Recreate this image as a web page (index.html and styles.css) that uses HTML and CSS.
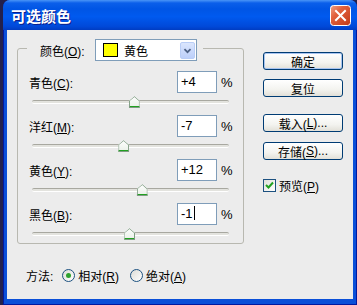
FILE: index.html
```html
<!DOCTYPE html>
<html>
<head>
    <meta charset="utf-8">
    <title>可选颜色</title>
    <link rel="stylesheet" href="styles.css">
</head>
<body>
    <div class="window">
        <div class="titlebar">
            <span class="title">可选颜色</span>
            <span class="close">
                <svg width="21" height="21" viewBox="0 0 21 21">
                    <defs>
                        <linearGradient id="closeBg" x1="0" y1="0" x2="1" y2="1">
                            <stop offset="0" stop-color="#f0a38a"/>
                            <stop offset="0.35" stop-color="#e2613d"/>
                            <stop offset="1" stop-color="#c23a17"/>
                        </linearGradient>
                    </defs>
                    <rect x="0.5" y="0.5" width="20" height="20" rx="3" fill="url(#closeBg)" stroke="#fff"/>
                    <path d="M6 6 L15 15 M15 6 L6 15" stroke="#fff" stroke-width="2" stroke-linecap="square"/>
                </svg>
            </span>
        </div>

        <div class="client">
            <div class="main">
                <div class="group">
                    <div class="group-head">
                        <span class="head-label">颜色(<u>O</u>):</span>
                        <div class="select">
                            <span class="swatch"></span>
                            <span class="select-text">黄色</span>
                            <span class="select-arrow">
                                <svg width="15" height="17" viewBox="0 0 15 17">
                                    <path d="M4 7 L7.5 10.5 L11 7" fill="none" stroke="#4d6185" stroke-width="2"/>
                                </svg>
                            </span>
                        </div>
                    </div>

                    <div class="rows">
                        <div class="row">
                            <div class="row-top">
                                <span class="label">青色(<u>C</u>):</span>
                                <span class="field">+4</span>
                                <span class="pct">%</span>
                            </div>
                            <div class="slider"><span class="thumb" style="left: 52%"></span></div>
                        </div>
                        <div class="row">
                            <div class="row-top">
                                <span class="label">洋红(<u>M</u>):</span>
                                <span class="field">-7</span>
                                <span class="pct">%</span>
                            </div>
                            <div class="slider"><span class="thumb" style="left: 46.5%"></span></div>
                        </div>
                        <div class="row">
                            <div class="row-top">
                                <span class="label">黄色(<u>Y</u>):</span>
                                <span class="field">+12</span>
                                <span class="pct">%</span>
                            </div>
                            <div class="slider"><span class="thumb" style="left: 56%"></span></div>
                        </div>
                        <div class="row">
                            <div class="row-top">
                                <span class="label">黑色(<u>B</u>):</span>
                                <span class="field">-1<span class="caret"></span></span>
                                <span class="pct">%</span>
                            </div>
                            <div class="slider"><span class="thumb" style="left: 49.5%"></span></div>
                        </div>
                    </div>
                </div>

                <div class="buttons">
                    <span class="btn btn-default">确定</span>
                    <span class="btn btn-reset">复位</span>
                    <span class="btn btn-load">载入(<u>L</u>)...</span>
                    <span class="btn btn-save">存储(<u>S</u>)...</span>
                    <label class="check">
                        <span class="check-box">
                            <svg width="11" height="11" viewBox="0 0 11 11">
                                <path d="M2 5 L4.5 7.5 L9 2.5" fill="none" stroke="#21a121" stroke-width="2"/>
                            </svg>
                        </span>
                        <span class="check-text">预览(<u>P</u>)</span>
                    </label>
                </div>
            </div>

            <div class="method">
                <span class="method-label">方法:</span>
                <span class="radio radio-on"></span>
                <span class="radio-text">相对(<u>R</u>)</span>
                <span class="radio"></span>
                <span class="radio-text">绝对(<u>A</u>)</span>
            </div>
        </div>
    </div>
</body>
</html>
```

FILE: styles.css
```css
body {
    margin: 0;
    background: #23214d;
    font-family: "Liberation Sans", "Noto Sans CJK SC", sans-serif;
    font-size: 12px;
    color: #000;
}

.window {
    margin-left: 3px;
    height: 305px;
    display: flex;
    flex-direction: column;
    background: #0a4fd8;
    border-radius: 7px 7px 0 0;
    box-shadow: inset 1px 0 #0019a0, inset -1px 0 #0019a0, inset 0 -1px #0019a0;
}

.titlebar {
    height: 30px;
    display: flex;
    align-items: center;
    justify-content: space-between;
    padding: 0 6px 0 8px;
    border-radius: 7px 7px 0 0;
    background: linear-gradient(#4a95f7 0, #0b5fea 3px, #0055e5 9px, #005aef 55%, #0049d9 88%, #003cc2 100%);
}

.title {
    color: #fff;
    font-family: "Noto Sans CJK SC", sans-serif;
    font-size: 15px;
    font-weight: bold;
    text-shadow: 1px 1px #0a1e8c;
}

.close {
    display: flex;
}

.client {
    flex: 1;
    margin: 0 4px 6px;
    background: #ececec;
}

.main {
    display: flex;
    padding: 18px 0 0 10px;
}

.group {
    width: 227px;
    box-sizing: border-box;
    border: 1px solid #b8b8b0;
    border-radius: 3px;
}

.group-head {
    display: flex;
    align-items: center;
    width: max-content;
    margin: -10px 0 0 9px;
    padding: 0 6px 0 13px;
    background: #ececec;
}

.head-label {
    width: 55px;
}

.select {
    width: 102px;
    height: 22px;
    box-sizing: border-box;
    display: flex;
    align-items: center;
    border: 1px solid #7f9db9;
    background: #fff;
    padding: 0 1px 0 7px;
}

.swatch {
    width: 13px;
    height: 12px;
    background: #ffff00;
    border: 1px solid #000;
}

.select-text {
    flex: 1;
    margin-left: 6px;
}

.select-arrow {
    display: flex;
    border: 1px solid #b9cdf6;
    border-radius: 2px;
    background: linear-gradient(#dbe6fd, #bccffa);
}

.select-arrow svg {
    width: 13px;
    height: 15px;
}

.rows {
    display: flex;
    flex-direction: column;
    gap: 4px;
    margin-top: 10px;
}

.row-top {
    display: grid;
    grid-template-columns: 148px 40px 1fr;
    align-items: center;
    height: 22px;
    padding-left: 11px;
}

.field {
    height: 22px;
    box-sizing: border-box;
    border: 1px solid #7f9db9;
    background: #fff;
    padding-left: 3px;
    line-height: 20px;
    font-size: 13px;
}

.caret {
    display: inline-block;
    width: 1px;
    height: 14px;
    background: #000;
    vertical-align: -2px;
    margin-left: 1px;
}

.pct {
    padding-left: 4px;
    font-size: 13px;
}

.slider {
    position: relative;
    width: 197px;
    height: 18px;
    margin-left: 14px;
}

.slider::before {
    content: "";
    position: absolute;
    left: 0;
    right: 0;
    top: 7px;
    height: 2px;
    border-radius: 2px;
    background: #e3e3de;
    border-top: 1px solid #a8a8a0;
    border-bottom: 1px solid #fff;
}

.thumb {
    position: absolute;
    top: 3px;
    width: 11px;
    height: 12px;
    transform: translateX(-50%);
    background:
        linear-gradient(to top, #21a121 0, #21a121 2px, transparent 2px),
        linear-gradient(#ffffff, #e8efe6);
    clip-path: polygon(50% 0, 100% 40%, 100% 100%, 0 100%, 0 40%);
}

.thumb::after {
    content: "";
    position: absolute;
    inset: 0;
    background: #7f9c83;
    clip-path: polygon(50% 0, 100% 40%, 100% 100%, 0 100%, 0 40%, 1px 40%, 1px calc(100% - 1px), calc(100% - 1px) calc(100% - 1px), calc(100% - 1px) 42%, 50% 1px, 1px 40%, 0 40%);
}

.buttons {
    display: flex;
    flex-direction: column;
    width: 80px;
    margin: 4px 0 0 19px;
}

.btn {
    height: 18px;
    box-sizing: border-box;
    display: flex;
    align-items: center;
    justify-content: center;
    border: 1px solid #003c74;
    border-radius: 3px;
    background: linear-gradient(#ffffff, #f3f3ef 60%, #e2e0d8);
}

.btn-default {
    box-shadow: inset 0 0 0 1px #a8c4f0;
}

.btn-reset {
    margin-top: 9px;
}

.btn-load {
    margin-top: 17px;
}

.btn-save {
    margin-top: 10px;
}

.check {
    display: flex;
    align-items: center;
    gap: 3px;
    margin-top: 17px;
}

.check-box {
    width: 13px;
    height: 13px;
    box-sizing: border-box;
    display: flex;
    align-items: center;
    justify-content: center;
    border: 1px solid #1c5180;
    background: linear-gradient(135deg, #e0e0da, #fff);
}

.method {
    display: flex;
    align-items: center;
    height: 16px;
    margin-top: 23px;
    padding-left: 19px;
}

.method-label {
    margin-right: 9px;
}

.radio {
    width: 13px;
    height: 13px;
    box-sizing: border-box;
    border: 1px solid #1c5180;
    border-radius: 50%;
    background: linear-gradient(135deg, #dcdcd6, #fff);
    display: flex;
    align-items: center;
    justify-content: center;
}

.radio-on::after {
    content: "";
    width: 5px;
    height: 5px;
    border-radius: 50%;
    background: #2ea22e;
}

.radio-text {
    margin: 0 11px 0 3px;
}
```
